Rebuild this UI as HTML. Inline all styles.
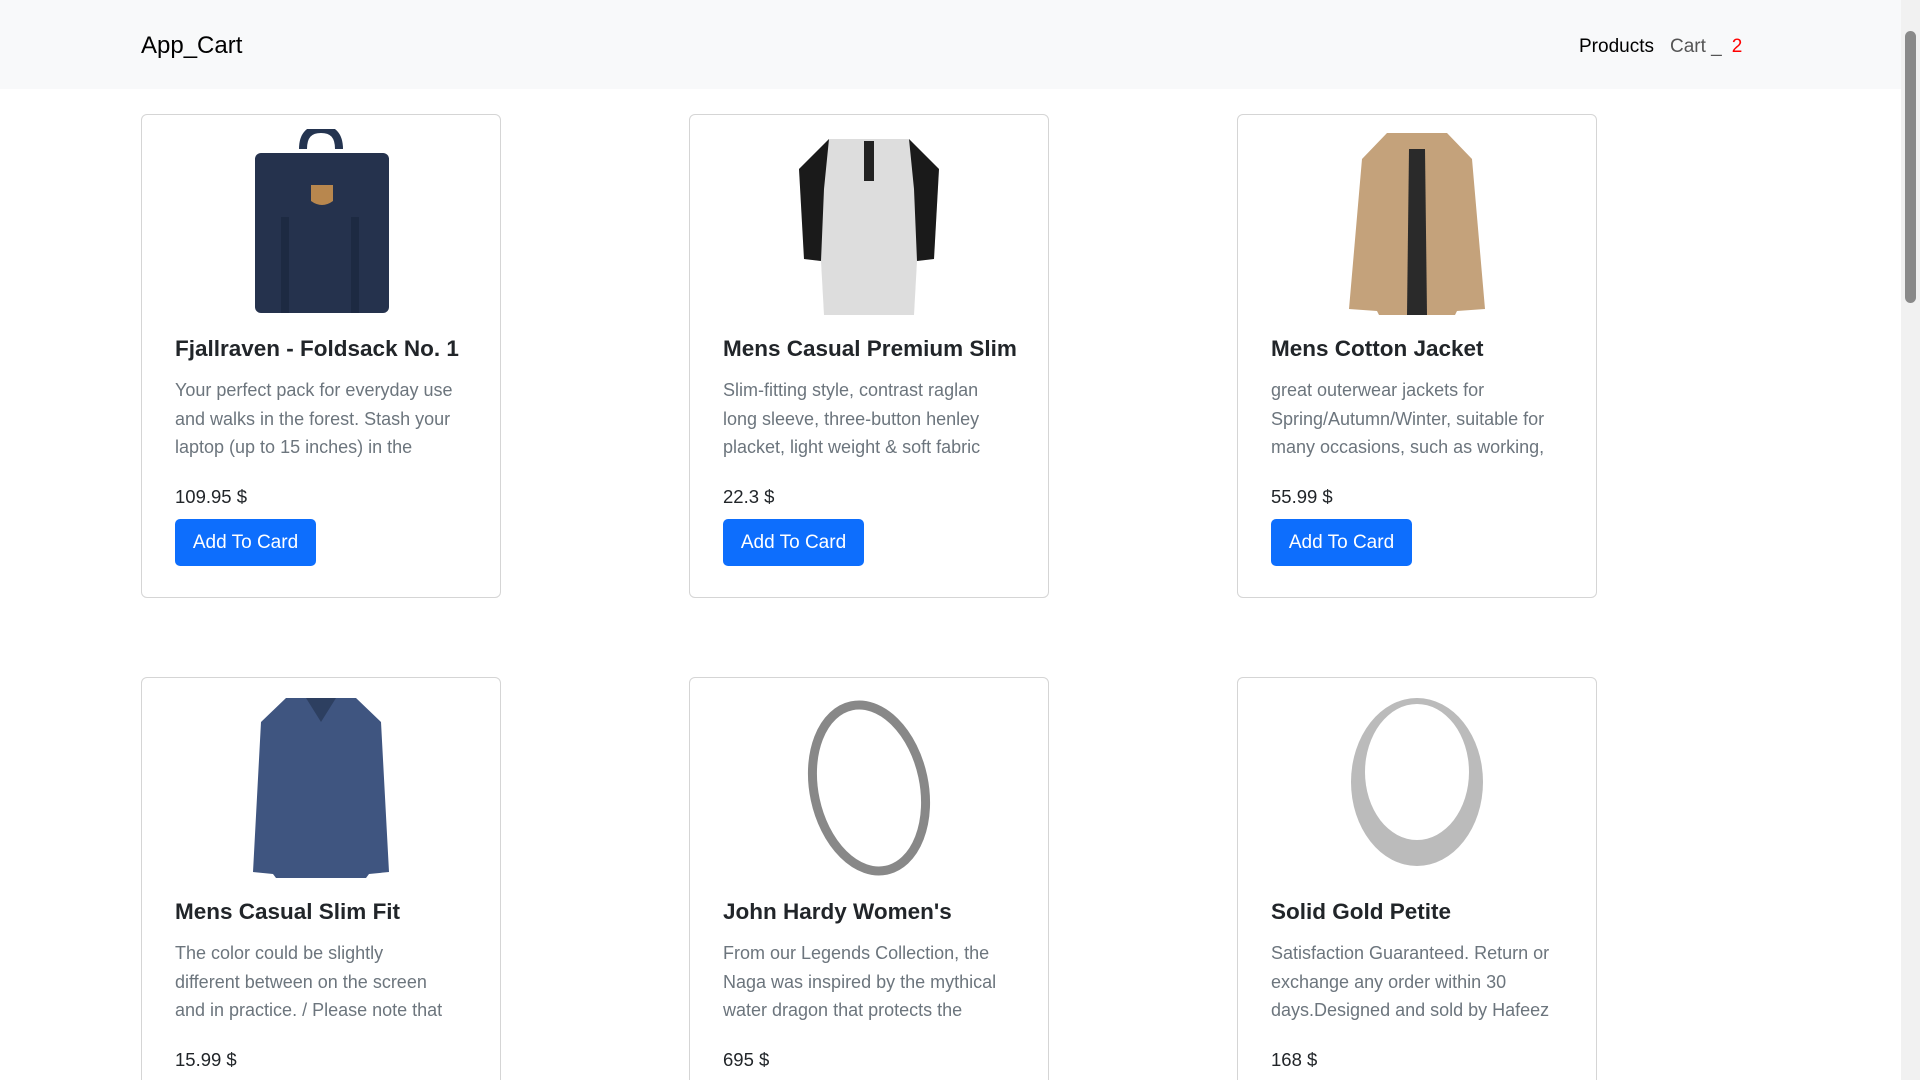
<!DOCTYPE html>
<html><head><meta charset="utf-8"><style>
*{box-sizing:border-box;margin:0;padding:0}
html,body{width:1920px;height:1080px;overflow:hidden}
body{background:#fff;font-family:"Liberation Sans",sans-serif}
#w{position:relative;width:1920px;height:1080px;overflow:hidden}
.nav{position:absolute;left:0;top:0;width:1901px;height:89px;background:#f8f9fa}
.brand{position:absolute;left:141px;top:32px;font-size:24px;color:#000}
.links{position:absolute;left:1579px;top:36px;font-size:19px;color:#000}
.links .c{color:#555;margin-left:16px}
.links .n{color:#f00;margin-left:10px}
.card{position:absolute;width:360px;height:484px;border:1px solid #d5d5d5;border-radius:6px;background:#fff}
.c2{height:500px}
.img{position:absolute;left:0;top:14px;width:100%;height:186px;display:flex;justify-content:center}
.t{position:absolute;left:33px;top:221px;font-size:22.5px;font-weight:bold;color:#212529}
.d{position:absolute;left:33px;top:261px;white-space:nowrap;font-size:18px;line-height:28.5px;color:#6c757d}
.p{position:absolute;left:33px;top:371px;font-size:18.5px;color:#212529}
.b{position:absolute;left:33px;top:404px;width:141px;height:47px;background:#0d6efd;border-radius:5px;color:#fff;font-size:19px;text-align:center;line-height:47px}
.sb{position:absolute;left:1901px;top:0;width:19px;height:1080px;background:#f1f1f1}
.thumb{position:absolute;left:1905px;top:31px;width:11px;height:272px;background:#8a8a8a;border-radius:6px}
</style></head><body><div id="w">
<div class="nav"><div class="brand">App_Cart</div><div class="links">Products<span class="c">Cart _</span><span class="n">2</span></div></div>

<div class="card" style="left:141px;top:114px">
<div class="img"><svg width="140" height="186" viewBox="0 0 140 186"><path d="M52 20 Q52 0 70 0 Q88 0 88 20" stroke="#243450" stroke-width="8" fill="none"/><rect x="4" y="24" width="134" height="160" rx="6" fill="#25324d"/><path d="M60 56 h22 v16 q-11 8 -22 0z" fill="#b8874e"/><rect x="30" y="88" width="8" height="96" fill="#1d2a42"/><rect x="100" y="88" width="8" height="96" fill="#1d2a42"/></svg></div>
<div class="t">Fjallraven - Foldsack No. 1</div>
<div class="d">Your perfect pack for everyday use<br>and walks in the forest. Stash your<br>laptop (up to 15 inches) in the</div>
<div class="p">109.95 $</div>
<div class="b">Add To Card</div></div>

<div class="card" style="left:689px;top:114px">
<div class="img"><svg width="140" height="186" viewBox="0 0 140 186"><path d="M30 10 L110 10 L140 40 L135 130 L118 132 L115 186 L25 186 L22 132 L5 130 L0 40Z" fill="#ddd"/><path d="M30 10 L0 40 L5 130 L22 132 L25 60Z M110 10 L140 40 L135 130 L118 132 L115 60Z" fill="#1a1a1a"/><rect x="65" y="12" width="10" height="40" fill="#222"/></svg></div>
<div class="t">Mens Casual Premium Slim</div>
<div class="d">Slim-fitting style, contrast raglan<br>long sleeve, three-button henley<br>placket, light weight &amp; soft fabric</div>
<div class="p">22.3 $</div>
<div class="b">Add To Card</div></div>

<div class="card" style="left:1237px;top:114px">
<div class="img"><svg width="140" height="186" viewBox="0 0 140 186"><path d="M40 4 L100 4 L125 30 L138 180 L110 182 L108 186 L32 186 L30 182 L2 180 L15 30Z" fill="#c4a27b"/><path d="M62 20 L78 20 L80 186 L60 186Z" fill="#2a2a2a"/></svg></div>
<div class="t">Mens Cotton Jacket</div>
<div class="d">great outerwear jackets for<br>Spring/Autumn/Winter, suitable for<br>many occasions, such as working,</div>
<div class="p">55.99 $</div>
<div class="b">Add To Card</div></div>

<div class="card c2" style="left:141px;top:677px">
<div class="img"><svg width="140" height="186" viewBox="0 0 140 186"><path d="M35 6 L105 6 L130 30 L138 180 L118 182 L115 186 L25 186 L22 182 L2 180 L10 30Z" fill="#3f5580"/><path d="M55 6 L70 30 L85 6" fill="#2d3f60"/></svg></div>
<div class="t">Mens Casual Slim Fit</div>
<div class="d">The color could be slightly<br>different between on the screen<br>and in practice. / Please note that</div>
<div class="p">15.99 $</div></div>

<div class="card c2" style="left:689px;top:677px">
<div class="img"><svg width="140" height="186" viewBox="0 0 140 186"><ellipse cx="70" cy="96" rx="55" ry="84" transform="rotate(-12 70 96)" fill="none" stroke="#888" stroke-width="9"/></svg></div>
<div class="t">John Hardy Women's</div>
<div class="d">From our Legends Collection, the<br>Naga was inspired by the mythical<br>water dragon that protects the</div>
<div class="p">695 $</div></div>

<div class="card c2" style="left:1237px;top:677px">
<div class="img"><svg width="140" height="186" viewBox="0 0 140 186"><ellipse cx="70" cy="90" rx="66" ry="84" fill="#bbb"/><ellipse cx="70" cy="80" rx="52" ry="68" fill="#fff"/></svg></div>
<div class="t">Solid Gold Petite</div>
<div class="d">Satisfaction Guaranteed. Return or<br>exchange any order within 30<br>days.Designed and sold by Hafeez</div>
<div class="p">168 $</div></div>

<div class="sb"></div><div class="thumb"></div>
</div></body></html>
